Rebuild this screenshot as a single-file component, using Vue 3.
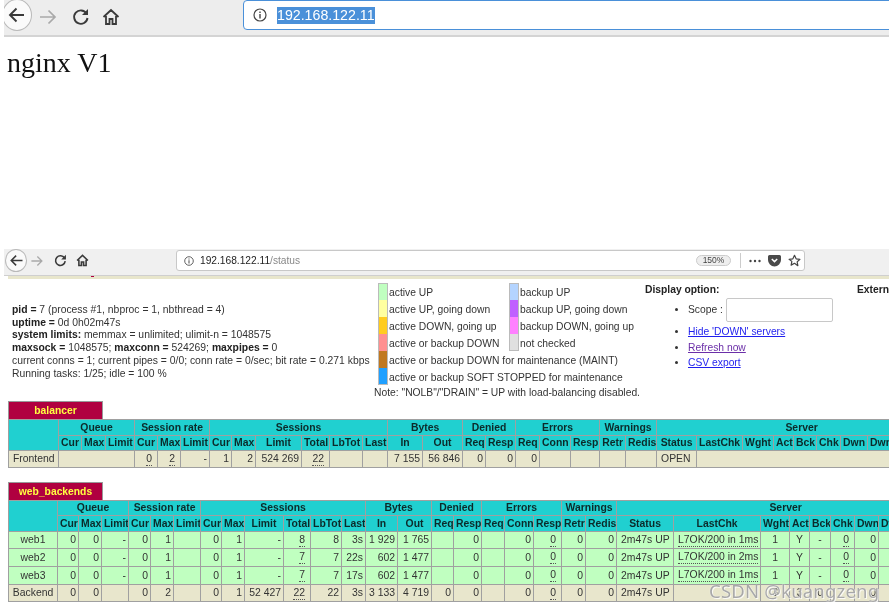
<script setup>
const legendLeft = [
  ['#c0ffc0', 'active UP'],
  ['#ffffa0', 'active UP, going down'],
  ['#ffcc20', 'active DOWN, going up'],
  ['#ff9090', 'active or backup DOWN'],
  ['#c07820', 'active or backup DOWN for maintenance (MAINT)'],
  ['#20a0ff', 'active or backup SOFT STOPPED for maintenance'],
]
const legendRight = [
  ['#b4d4ff', 'backup UP'],
  ['#c060ff', 'backup UP, going down'],
  ['#ff80ff', 'backup DOWN, going up'],
  ['#e0e0e0', 'not checked'],
]
const diff = (e) => e.slice(1).map((v, i) => v - e[i])
const groups = [['Queue', 3], ['Session rate', 3], ['Sessions', 6], ['Bytes', 2], ['Denied', 2], ['Errors', 3], ['Warnings', 2], ['Server', 9]]
const subs = ['Cur', 'Max', 'Limit', 'Cur', 'Max', 'Limit', 'Cur', 'Max', 'Limit', 'Total', 'LbTot', 'Last', 'In', 'Out', 'Req', 'Resp', 'Req', 'Conn', 'Resp', 'Retr', 'Redis', 'Status', 'LastChk', 'Wght', 'Act', 'Bck', 'Chk', 'Dwn', 'Dwntme', 'Thrtle']
const server = (name, tot, last, inb, outb, chk, h) => ({
  cls: 'up',
  h,
  cells: [{ t: name, a: 'c' }, '0', '0', '-', '0', '1', '', '0', '1', '-', { t: tot, u: 1 }, tot, last, inb, outb, '', '0', '', '0', { t: '0', u: 1 }, '0', '0',
    { t: '2m47s UP', a: 'l' }, { t: chk, a: 'l', d: 1 }, { t: '1', a: 'c' }, { t: 'Y', a: 'c' }, { t: '-', a: 'c' }, { t: '0', u: 1 }, '0', '', ''],
})
const tables = [
  {
    title: 'balancer',
    widths: diff([8, 58, 81, 105, 134, 157, 180, 209, 231, 255, 301, 329, 362, 387, 422, 462, 485, 515, 539, 570, 599, 625, 656, 696, 742, 773, 793, 816, 840, 867, 907, 946]),
    heads: [16, 15],
    rows: [{
      cls: 'tot',
      h: 17,
      cells: [{ t: 'Frontend', a: 'l' }, { t: '', s: 3 }, { t: '0', u: 1 }, { t: '2', u: 1 }, '-', '1', '2', '524 269', { t: '22', u: 1 }, '', '', '7 155', '56 846', '0', '0', '0', '', '', '', '', { t: 'OPEN', a: 'l' }, { t: '', s: 8 }],
    }],
  },
  {
    title: 'web_backends',
    widths: diff([8, 57, 78, 101, 128, 150, 173, 200, 221, 244, 283, 310, 341, 365, 397, 431, 453, 481, 504, 533, 561, 585, 616, 673, 760, 789, 809, 830, 854, 878, 918, 954]),
    heads: [15, 16],
    rows: [
      server('web1', '8', '3s', '1 929', '1 765', 'L7OK/200 in 1ms', 17),
      server('web2', '7', '22s', '602', '1 477', 'L7OK/200 in 2ms', 18),
      server('web3', '7', '17s', '602', '1 477', 'L7OK/200 in 1ms', 18),
      {
        cls: 'tot',
        h: 17,
        cells: [{ t: 'Backend', a: 'c' }, '0', '0', '', '0', '2', '', '0', '1', '52 427', { t: '22', u: 1 }, '22', '3s', '3 133', '4 719', '0', '0', '', '0', { t: '0', u: 1 }, '0', '0',
          { t: '2m47s UP', a: 'l' }, '', { t: '3', a: 'c' }, { t: '3', a: 'c' }, { t: '0', a: 'c' }, '', '0', '', ''],
      },
    ],
  },
]
const norm = (c) => (typeof c === 'string' ? { t: c } : c)
</script>

<template>
  <div class="root">
    <header class="bar bar-a">
      <span class="back back-a">
        <svg width="20" height="20" viewBox="0 0 20 20"><path d="M17 10H3.500M9.500 3.500 3 10l6.500 6.500" fill="none" stroke="#3a3a3a" stroke-width="1.900" /></svg>
      </span>
      <svg class="fwd-a" width="20" height="20" viewBox="0 0 20 20"><path d="M2 10h15M10.500 3.500 17 10l-6.500 6.500" fill="none" stroke="#a9a9a9" stroke-width="1.700" /></svg>
      <svg class="rel-a" width="18" height="18" viewBox="0 0 18 18"><path d="M14.500 5.500A6.700 6.700 0 1 0 15.500 10" fill="none" stroke="#3a3a3a" stroke-width="1.900" /><path d="M16 1v6h-6z" fill="#3a3a3a" /></svg>
      <svg class="home-a" width="18" height="18" viewBox="0 0 18 18"><path d="M1.500 9 9 2l7.500 7M4 8v8h3.500v-5h3v5H14V8" fill="none" stroke="#3a3a3a" stroke-width="1.800" /></svg>
      <div class="url url-a">
        <svg width="14" height="14" viewBox="0 0 14 14"><circle cx="7" cy="7" r="6" fill="none" stroke="#444" stroke-width="1.200" /><path d="M7 6v4.500M7 3.500v1.500" stroke="#444" stroke-width="1.400" /></svg>
        <span class="sel">192.168.122.11</span>
      </div>
    </header>

    <section class="first-page">
      <h1>nginx V1</h1>
    </section>

    <header class="bar bar-b">
      <span class="back back-b">
        <svg width="15" height="15" viewBox="0 0 20 20"><path d="M18 10H3.500M9.500 3.500 3 10l6.500 6.500" fill="none" stroke="#3a3a3a" stroke-width="2" /></svg>
      </span>
      <svg class="fwd-b" width="14" height="14" viewBox="0 0 20 20"><path d="M2 10h15M10.500 3.500 17 10l-6.500 6.500" fill="none" stroke="#a9a9a9" stroke-width="1.800" /></svg>
      <svg class="rel-b" width="13" height="13" viewBox="0 0 18 18"><path d="M14.500 5.500A6.700 6.700 0 1 0 15.500 10" fill="none" stroke="#3a3a3a" stroke-width="2.200" /><path d="M16.500 1v6.500h-6.500z" fill="#3a3a3a" /></svg>
      <svg class="home-b" width="13" height="13" viewBox="0 0 18 18"><path d="M1.500 9 9 2l7.500 7M4 8v8h3.500v-5h3v5H14V8" fill="none" stroke="#3a3a3a" stroke-width="2.200" /></svg>
      <div class="url url-b">
        <svg width="10" height="10" viewBox="0 0 14 14"><circle cx="7" cy="7" r="6" fill="none" stroke="#555" stroke-width="1.300" /><path d="M7 6v4.500M7 3.500v1.500" stroke="#555" stroke-width="1.500" /></svg>
        <span class="addr">192.168.122.11<i>/status</i></span>
        <span class="zoom">150%</span>
        <span class="sep"></span>
        <svg class="dots" width="12" height="4" viewBox="0 0 12 4"><circle cx="1.500" cy="2" r="1.200" fill="#444" /><circle cx="6" cy="2" r="1.200" fill="#444" /><circle cx="10.500" cy="2" r="1.200" fill="#444" /></svg>
        <svg class="pocket" width="13" height="12" viewBox="0 0 13 12"><path d="M1.500 0h10A1.500 1.500 0 0 1 13 1.500V5a6.500 6.500 0 0 1-13 0V1.500A1.500 1.500 0 0 1 1.500 0z" fill="#4a4a4a" /><path d="M3.800 4 6.500 6.600 9.200 4" fill="none" stroke="#fff" stroke-width="1.500" /></svg>
        <svg class="star" width="13" height="13" viewBox="0 0 24 24"><path d="m12 2.500 3 6.400 7 .9-5.100 4.800 1.300 6.900L12 17.200l-6.200 3.300 1.300-6.900L2 9.800l7-.9z" fill="none" stroke="#444" stroke-width="2.200" stroke-linejoin="round" /></svg>
      </div>
    </header>

    <main class="content">
      <span class="tick"></span>
      <div class="strip"></div>
      <div class="top">
        <div class="info">
          <p><b>pid = </b>7 (process #1, nbproc = 1, nbthread = 4)</p>
          <p><b>uptime = </b>0d 0h02m47s</p>
          <p><b>system limits:</b> memmax = unlimited; ulimit-n = 1048575</p>
          <p><b>maxsock = </b>1048575; <b>maxconn = </b>524269; <b>maxpipes = </b>0</p>
          <p>current conns = 1; current pipes = 0/0; conn rate = 0/sec; bit rate = 0.271 kbps</p>
          <p>Running tasks: 1/25; idle = 100 %</p>
        </div>
        <div class="legend">
          <div class="legend-cols">
            <ul class="lg lg-left">
              <li v-for="l in legendLeft" :key="l[1]"><i :style="{ background: l[0] }"></i>{{ l[1] }}</li>
            </ul>
            <ul class="lg lg-right">
              <li v-for="l in legendRight" :key="l[1]"><i :style="{ background: l[0] }"></i>{{ l[1] }}</li>
            </ul>
          </div>
          <p class="note">Note: "NOLB"/"DRAIN" = UP with load-balancing disabled.</p>
        </div>
        <div class="display">
          <b>Display option:</b>
          <ul>
            <li class="scope">Scope : <span class="scope-input"></span></li>
            <li><a>Hide 'DOWN' servers</a></li>
            <li><a class="visited">Refresh now</a></li>
            <li><a>CSV export</a></li>
          </ul>
        </div>
        <div class="extern"><b>External resources:</b></div>
      </div>

      <section v-for="tb in tables" :key="tb.title" class="proxy">
        <div class="title">{{ tb.title }}</div>
        <table>
          <colgroup>
            <col v-for="(w, i) in tb.widths" :key="i" :style="{ width: w + 'px' }" />
          </colgroup>
          <thead>
            <tr :style="{ height: tb.heads[0] + 'px' }">
              <th rowspan="2"></th>
              <th v-for="g in groups" :key="g[0]" :colspan="g[1]">{{ g[0] }}</th>
            </tr>
            <tr :style="{ height: tb.heads[1] + 'px' }">
              <th v-for="(s, i) in subs" :key="i">{{ s }}</th>
            </tr>
          </thead>
          <tbody>
            <tr v-for="(r, ri) in tb.rows" :key="ri" :class="r.cls" :style="{ height: r.h + 'px' }">
              <td v-for="(raw, ci) in r.cells" :key="ci" :colspan="norm(raw).s || 1" :class="norm(raw).a">
                <u v-if="norm(raw).u">{{ norm(raw).t }}</u>
                <u v-else-if="norm(raw).d" class="chk">{{ norm(raw).t }}</u>
                <template v-else>{{ norm(raw).t }}</template>
              </td>
            </tr>
          </tbody>
        </table>
      </section>
    </main>

    <div class="mark">CSDN @kuangzeng</div>
  </div>
</template>

<style>
html, body { margin: 0; background: #fff; }
</style>

<style scoped>
.root {
  position: relative;
  width: 894px;
  height: 613px;
  overflow: hidden;
  background: #fff;
  font-family: "Liberation Sans", Arial, sans-serif;
  color: #333;
  filter: blur(0.3px);
}
.bar {
  display: flex;
  align-items: center;
  width: 885px;
  margin-left: 4px;
  overflow: hidden;
  background: #ededed;
  box-sizing: border-box;
}
.bar-a { height: 37px; border-bottom: 2px solid #d4d4d4; }
.bar-b { height: 27px; border-bottom: 1px solid #cfcfcf; background: #f0f0f0; }
.back {
  flex: none;
  display: flex;
  align-items: center;
  justify-content: center;
  box-sizing: border-box;
  border-radius: 50%;
  background: #fafafa;
  border: 1px solid #b9b9b9;
}
.back-a { width: 30px; height: 32px; margin: -6px 0 0 -2px; border-radius: 15px / 16px; }
.back-b { width: 22px; height: 23px; margin: -3px 0 0 1px; }
.fwd-a { flex: none; margin: 0 0 2px 6px; }
.rel-a { flex: none; margin: 0 0 2px 14px; }
.home-a { flex: none; margin: 0 0 2px 12px; }
.fwd-b { flex: none; margin: -3px 0 0 3px; }
.rel-b { flex: none; margin: -3px 0 0 10px; }
.home-b { flex: none; margin: -3px 0 0 9px; }
.url {
  display: flex;
  align-items: center;
  background: #fff;
  box-sizing: border-box;
}
.url-a {
  flex: none;
  width: 680px;
  height: 30px;
  margin: -5px 0 0 123px;
  padding-left: 9px;
  border: 1.500px solid #4a90d9;
  border-radius: 4px;
}
.sel {
  margin-left: 10px;
  padding: 1px 0;
  background: #4a90d9;
  color: #fff;
  font-size: 14.200px;
  line-height: 15px;
}
.url-b {
  flex: none;
  width: 629px;
  height: 21px;
  margin: -3px 0 0 87px;
  padding-left: 7px;
  border: 1px solid #c8c8c8;
  border-radius: 3px;
}
.addr { margin-left: 6px; font-size: 10.200px; color: #222; }
.addr i { font-style: normal; color: #888; }
.zoom {
  margin-left: auto;
  box-sizing: border-box;
  width: 35px;
  height: 11px;
  border-radius: 6px;
  background: #eee;
  border: 1px solid #ccc;
  color: #444;
  font-size: 8.500px;
  line-height: 9px;
  text-align: center;
}
.sep { width: 1px; height: 15px; margin: 0 8px 0 9px; background: #ccc; }
.dots { margin-right: 7px; }
.pocket { margin-right: 7px; }
.star { margin-right: 3px; }

.first-page { height: 212px; box-sizing: border-box; padding: 9px 0 0 7px; }
h1 {
  margin: 0;
  font: 400 28px/34px "Liberation Serif", "Times New Roman", serif;
  color: #111;
}

.content {
  position: relative;
  width: 889px;
  overflow: hidden;
  font-size: 10.300px;
}
.strip { height: 3px; margin-left: 8px; background: #e8e6cc; }
.tick { position: absolute; left: 91px; top: 0; width: 3px; height: 1px; background: #b00040; }
.top { display: flex; height: 122px; padding-left: 12px; }
.info { flex: none; width: 362px; padding-top: 25px; font-size: 10.360px; line-height: 12.700px; }
.info p { margin: 0; white-space: nowrap; }
.info b { color: #222; }
.legend { flex: none; width: 271px; }
.legend-cols { display: flex; padding: 4px 0 0 4px; }
.lg { list-style: none; margin: 0; padding: 0; }
.lg-left { width: 131px; flex: none; }
.lg li { display: flex; align-items: flex-start; height: 17px; line-height: 19px; white-space: nowrap; }
.lg i {
  flex: none;
  box-sizing: border-box;
  width: 10px;
  height: 17px;
  margin-right: 1px;
  border: 1px solid #bbb;
  border-width: 0 1px;
}
.lg li:first-child i { border-top-width: 1px; }
.lg li:last-child i { border-bottom-width: 1px; }
.note { margin: 1px 0 0; line-height: 14px; white-space: nowrap; }
.display { flex: none; width: 212px; padding-top: 4px; }
.display b { color: #222; line-height: 13px; display: block; }
.display ul { margin: 1px 0 0; padding: 0 0 0 43px; line-height: 15.500px; }
.display li.scope { display: list-item; height: 26px; line-height: 26px; margin-bottom: 1px; }
.scope-input {
  display: inline-block;
  box-sizing: border-box;
  width: 107px;
  height: 24px;
  vertical-align: middle;
  background: #fff;
  border: 1px solid #c8c8c8;
  border-radius: 2px;
}
.display a { color: #1f1fee; text-decoration: underline; }
.display a.visited { color: #6b2fa8; }
.extern { flex: none; padding-top: 4px; white-space: nowrap; }
.extern b { color: #222; line-height: 13px; display: block; }

.proxy { margin: 0 0 14px 8px; }
.title {
  box-sizing: border-box;
  width: 95px;
  height: 19px;
  margin-bottom: -1px;
  background: #b00040;
  border: 1px solid #999;
  border-bottom: 0;
  color: #ffff40;
  font-weight: 700;
  line-height: 18px;
  text-align: center;
}
table {
  border-collapse: collapse;
  table-layout: fixed;
  width: 0;
  font-size: 10.400px;
  white-space: nowrap;
}
th, td {
  box-sizing: border-box;
  padding: 0 2px;
  border: 1px solid #a0a0a0;
  overflow: hidden;
}
th {
  background: #20d0d0;
  color: #0c2a2a;
  font-weight: 700;
  text-align: center;
  line-height: 12px;
}
td { text-align: right; line-height: 12px; }
td.c { text-align: center; }
td.l { text-align: left; padding-left: 4px; }
tr.up td { background: #c0ffc0; }
tr.tot td { background: #e8e6cc; }
u {
  display: inline-block;
  margin-right: 3px;
  line-height: 12px;
  text-decoration: none;
  border-bottom: 1px dotted #555;
}
u.chk { margin-right: 0; }
.mark {
  position: absolute;
  left: 709px;
  top: 578px;
  color: #a8a8a8;
  font-family: "Noto Sans", sans-serif;
  font-size: 18.500px;
  line-height: 26px;
  letter-spacing: 0.200px;
  white-space: nowrap;
  text-shadow: 0 0 1px #fff, 1px 1px 0 rgba(255,255,255,.8);
}
</style>
